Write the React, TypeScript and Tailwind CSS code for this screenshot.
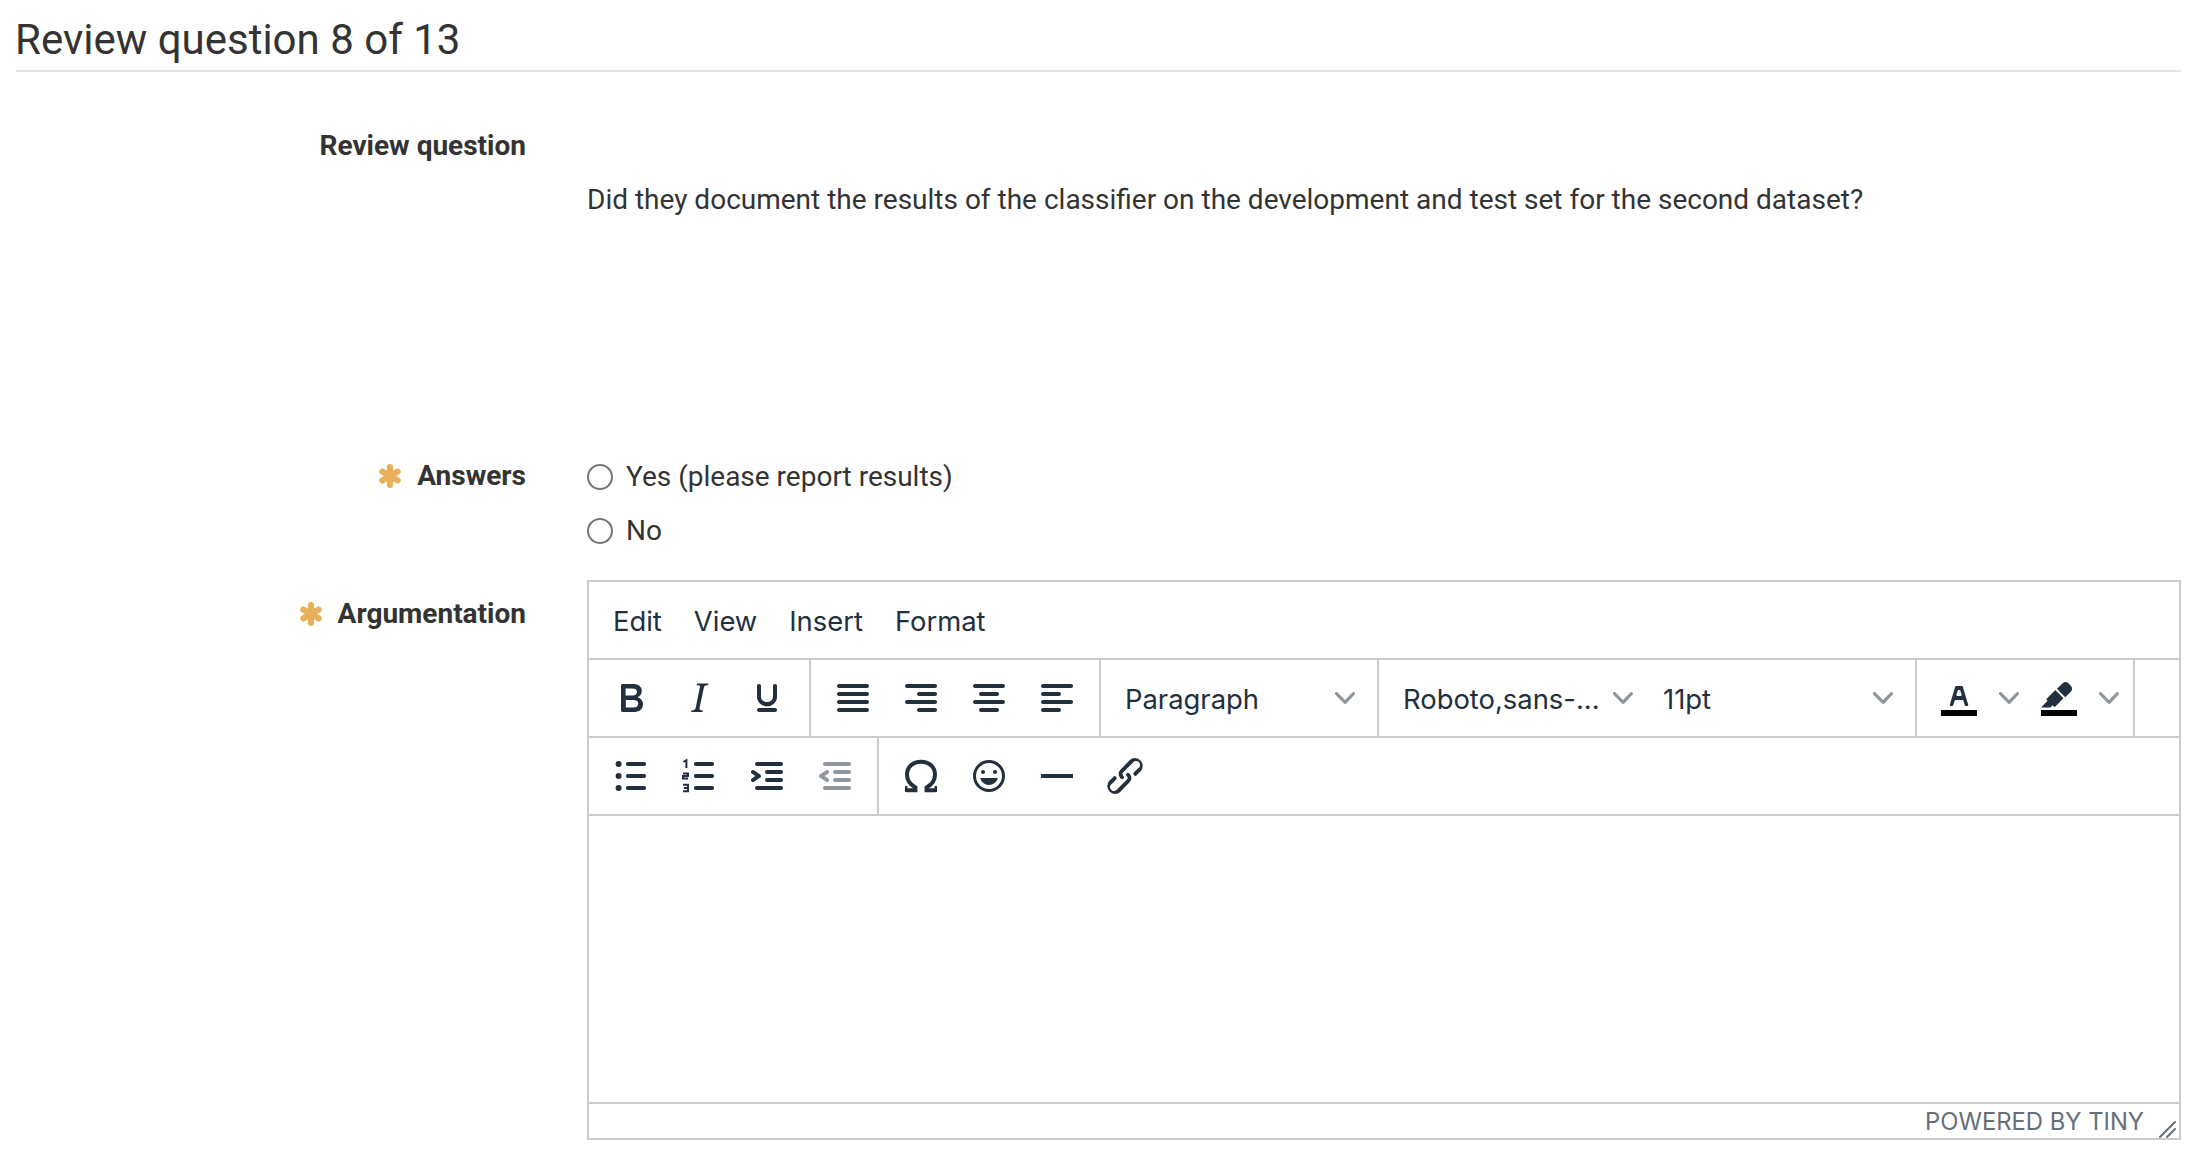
import type { ReactNode } from "react";

const Icon = ({ children, muted }: { children: ReactNode; muted?: boolean }) => (
  <svg viewBox="0 0 24 24" className={muted ? "w-12 h-12 fill-[#222f3e] opacity-50" : "w-12 h-12 fill-[#222f3e]"}>
    {children}
  </svg>
);

const Chevron = () => (
  <svg viewBox="0 0 10 10" className="w-5 h-5 fill-[#222f3e] opacity-50 shrink-0">
    <path d="M8.7 2.2c.3-.3.8-.3 1 0 .4.4.4.9 0 1.2L5.7 7.8c-.3.3-.9.3-1.2 0L.2 3.4a.8.8 0 0 1 0-1.2c.3-.3.8-.3 1.1 0L5 6l3.7-3.8z" />
  </svg>
);

const Star = () => (
  <svg viewBox="0 0 24 24" className="w-6 h-6 stroke-[#e9b05c] shrink-0" strokeWidth="6.2" strokeLinecap="round">
    <path d="M12 3.2v17.6M4.4 7.6l15.2 8.8M19.6 7.6L4.4 16.4" />
  </svg>
);

const Btn = ({ children }: { children: ReactNode }) => (
  <div className="w-[68px] h-[68px] flex items-center justify-center shrink-0">{children}</div>
);

const Group = ({ children, last }: { children: ReactNode; last?: boolean }) => (
  <div className={last ? "flex items-center px-2" : "flex items-center px-2 border-r-2 border-[#cccccc]"}>{children}</div>
);

const Select = ({ label }: { label: string }) => (
  <div className="w-[260px] h-[68px] flex items-center justify-between pl-4 pr-[14px] text-[27.4px] text-[#222f3e] font-[Inter,sans-serif]">
    <span className="truncate pt-1">{label}</span>
    <Chevron />
  </div>
);

const Split = ({ children }: { children: ReactNode }) => (
  <div className="flex items-center h-[68px]">
    <div className="w-[68px] flex justify-center">{children}</div>
    <div className="w-8 flex justify-center">
      <Chevron />
    </div>
  </div>
);

const ToolbarRow = ({ children }: { children: ReactNode }) => (
  <div className="h-[78px] flex border-b-2 border-[#cccccc]">{children}</div>
);

const Bar = ({ d }: { d: string }) => <path d={d} fill="none" stroke="#222f3e" strokeWidth="1.9" strokeLinecap="round" />;

const Label = ({ text, required }: { text: string; required?: boolean }) => (
  <div className="flex items-center justify-end gap-[15px] font-bold text-[28px] leading-[40px] text-[#333333]">
    {required && <Star />}
    <span>{text}</span>
  </div>
);

const Radio = ({ label }: { label: string }) => (
  <label className="h-[54px] flex items-center gap-[13px] text-[28px] text-[#333333]">
    <input type="radio" name="answer" className="appearance-none w-[26px] h-[26px] rounded-full border-2 border-[#767676] bg-white" />
    {label}
  </label>
);

export default function App() {
  return (
    <div className="min-h-[1160px] bg-white pl-4 pr-[15px] font-[Roboto,sans-serif] text-[#333333] overflow-hidden">
      <h3 className="h-[72px] pt-[15px] text-[42px] leading-[50px] border-b-2 border-[#e5e5e5]">
        <span className="-ml-[1px] block">Review question 8 of 13</span>
      </h3>

      <div className="grid grid-cols-[510px_1594px] gap-x-[61px]">
        <div className="pt-[54px] h-[378px]">
          <Label text="Review question" />
        </div>
        <div className="pt-[108px] text-[28px] leading-[40px]">
          Did they document the results of the classifier on the development and test set for the second dataset?
        </div>

        <div className="pt-[6px] h-[130px]">
          <Label text="Answers" required />
        </div>
        <div>
          <Radio label="Yes (please report results)" />
          <Radio label="No" />
        </div>

        <div className="pt-[14px]">
          <Label text="Argumentation" required />
        </div>

        {/* Editor */}
        <div className="border-2 border-[#cccccc] h-[560px] flex flex-col">
          <div className="h-[78px] flex items-center pl-2 pt-1 border-b-2 border-[#cccccc] text-[27.4px] text-[#222f3e] font-[Inter,sans-serif]">
            <span className="px-4">Edit</span>
            <span className="px-4">View</span>
            <span className="px-4">Insert</span>
            <span className="px-4">Format</span>
          </div>

          <ToolbarRow>
            <Group>
              <Btn>
                <Icon>
                  <path d="M7.8 19c-.3 0-.5 0-.6-.2l-.2-.5V5.7c0-.2 0-.4.2-.5l.6-.2h5c1.5 0 2.7.3 3.5 1 .7.6 1.1 1.4 1.1 2.5a3 3 0 0 1-.6 1.9c-.4.6-1 1-1.6 1.2.4.1.9.3 1.3.6s.8.7 1 1.2c.4.4.5 1 .5 1.6 0 1.3-.4 2.3-1.3 3-.8.7-2.1 1-3.8 1H7.8zm5-8.3c.6 0 1.2-.1 1.6-.5.4-.3.6-.7.6-1.3 0-1.1-.8-1.7-2.3-1.7H9.3v3.5h3.4zm.5 6c.7 0 1.3-.1 1.7-.4.4-.4.6-.9.6-1.5s-.2-1-.7-1.4c-.4-.3-1-.4-2-.4H9.4v3.8h4z" />
                </Icon>
              </Btn>
              <Btn>
                <Icon>
                  <path d="M16.7 4.7l-.1.9h-.3c-.6 0-1 0-1.4.3-.3.3-.4.6-.5 1.1l-2.1 9.8v.6c0 .5.4.8 1.4.8h.2l-.2.8H8l.2-.8h.2c1.1 0 1.8-.5 2-1.5l2-9.8.1-.5c0-.6-.4-.8-1.4-.8h-.3l.2-.9h5.8z" />
                </Icon>
              </Btn>
              <Btn>
                <Icon>
                  <path d="M16 5c.6 0 1 .4 1 1v5.5a4 4 0 0 1-.4 1.8l-1 1.4a5.3 5.3 0 0 1-5.5 1 5 5 0 0 1-1.6-1c-.5-.4-.8-.9-1.1-1.4a4 4 0 0 1-.4-1.8V6c0-.6.4-1 1-1s1 .4 1 1v5.5c0 .3 0 .6.2 1l.6.7a3.3 3.3 0 0 0 2.2.8 3.4 3.4 0 0 0 2.2-.8c.3-.2.4-.5.6-.8l.2-.9V6c0-.6.4-1 1-1zM8 17h8c.6 0 1 .4 1 1s-.4 1-1 1H8a1 1 0 0 1 0-2z" />
                </Icon>
              </Btn>
            </Group>
            <Group>
              <Btn>
                <Icon>
                  <path d="M5 5h14c.6 0 1 .4 1 1s-.4 1-1 1H5a1 1 0 1 1 0-2zm0 4h14c.6 0 1 .4 1 1s-.4 1-1 1H5a1 1 0 1 1 0-2zm0 4h14c.6 0 1 .4 1 1s-.4 1-1 1H5a1 1 0 0 1 0-2zm0 4h14c.6 0 1 .4 1 1s-.4 1-1 1H5a1 1 0 0 1 0-2z" />
                </Icon>
              </Btn>
              <Btn>
                <Icon>
                  <path d="M5 5h14c.6 0 1 .4 1 1s-.4 1-1 1H5a1 1 0 1 1 0-2zm6 4h8c.6 0 1 .4 1 1s-.4 1-1 1h-8a1 1 0 0 1 0-2zm0 8h8c.6 0 1 .4 1 1s-.4 1-1 1h-8a1 1 0 0 1 0-2zm-6-4h14c.6 0 1 .4 1 1s-.4 1-1 1H5a1 1 0 0 1 0-2z" />
                </Icon>
              </Btn>
              <Btn>
                <Icon>
                  <path d="M5 5h14c.6 0 1 .4 1 1s-.4 1-1 1H5a1 1 0 1 1 0-2zm3 4h8c.6 0 1 .4 1 1s-.4 1-1 1H8a1 1 0 1 1 0-2zm0 8h8c.6 0 1 .4 1 1s-.4 1-1 1H8a1 1 0 0 1 0-2zm-3-4h14c.6 0 1 .4 1 1s-.4 1-1 1H5a1 1 0 0 1 0-2z" />
                </Icon>
              </Btn>
              <Btn>
                <Icon>
                  <path d="M5 5h14c.6 0 1 .4 1 1s-.4 1-1 1H5a1 1 0 1 1 0-2zm0 4h8c.6 0 1 .4 1 1s-.4 1-1 1H5a1 1 0 1 1 0-2zm0 8h8c.6 0 1 .4 1 1s-.4 1-1 1H5a1 1 0 0 1 0-2zm0-4h14c.6 0 1 .4 1 1s-.4 1-1 1H5a1 1 0 0 1 0-2z" />
                </Icon>
              </Btn>
            </Group>
            <Group>
              <Select label="Paragraph" />
            </Group>
            <Group>
              <Select label="Roboto,sans-..." />
              <Select label="11pt" />
            </Group>
            <Group>
              <Split>
                <Icon>
                  <path d="M3 18h18v3H3z" fill="#000000" />
                  <path d="M8.7 16h-.8a.5.5 0 0 1-.5-.6l2.7-9c.1-.3.3-.4.5-.4h2.8c.2 0 .4.1.5.4l2.7 9a.5.5 0 0 1-.5.6h-.8a.5.5 0 0 1-.4-.4l-.7-2.2c0-.3-.3-.4-.5-.4h-3.4c-.2 0-.4.1-.5.4l-.7 2.2c0 .3-.2.4-.4.4zm2.6-7.6l-.6 2a.5.5 0 0 0 .5.6h1.6a.5.5 0 0 0 .5-.6l-.6-2c0-.3-.3-.4-.5-.4h-.4c-.2 0-.4.1-.5.4z" />
                </Icon>
              </Split>
              <Split>
                <Icon>
                  <path d="M3 18h18v3H3z" fill="#000000" />
                  <path d="M7.7 16.7H3l3.3-3.3-.7-.8L10.2 8l4 4.1-4 4.2c-.2.2-.6.2-.8 0l-.6-.7-1.1 1.1zm5-7.5L11 7.4l3-2.9a2 2 0 0 1 2.6 0L18 6c.7.7.7 2 0 2.7l-2.9 2.9-1.8-1.8-.5-.6" />
                </Icon>
              </Split>
            </Group>
          </ToolbarRow>

          <ToolbarRow>
            <Group>
              <Btn>
                <Icon>
                  <Bar d="M10.4 6h8.2M10.4 12h8.2M10.4 18h8.2" />
                  <circle cx="5.8" cy="6" r="1.5" />
                  <circle cx="5.8" cy="12" r="1.5" />
                  <circle cx="5.8" cy="18" r="1.5" />
                </Icon>
              </Btn>
              <Btn>
                <Icon>
                  <Bar d="M10.4 6h8.2M10.4 12h8.2M10.4 18h8.2" />
                  <path d="M4.2 5l1.5-.9V8M4 10.8h2.5v1.2H4v1.3h2.5M4 16.4h2.5v3.2H4M4.4 18h2" fill="none" stroke="#222f3e" strokeWidth="1" />
                </Icon>
              </Btn>
              <Btn>
                <Icon>
                  <path d="M7 5h12c.6 0 1 .4 1 1s-.4 1-1 1H7a1 1 0 1 1 0-2zm5 4h7c.6 0 1 .4 1 1s-.4 1-1 1h-7a1 1 0 0 1 0-2zm0 4h7c.6 0 1 .4 1 1s-.4 1-1 1h-7a1 1 0 0 1 0-2zm-5 4h12a1 1 0 0 1 0 2H7a1 1 0 0 1 0-2zm-2.6-3.8L6.2 12l-1.8-1.2a1 1 0 0 1 1.2-1.6l3 2a1 1 0 0 1 0 1.6l-3 2a1 1 0 1 1-1.2-1.6z" />
                </Icon>
              </Btn>
              <Btn>
                <Icon muted>
                  <path d="M7 5h12c.6 0 1 .4 1 1s-.4 1-1 1H7a1 1 0 1 1 0-2zm5 4h7c.6 0 1 .4 1 1s-.4 1-1 1h-7a1 1 0 0 1 0-2zm0 4h7c.6 0 1 .4 1 1s-.4 1-1 1h-7a1 1 0 0 1 0-2zm-5 4h12a1 1 0 0 1 0 2H7a1 1 0 0 1 0-2zm1.6-3.8a1 1 0 0 1-1.2 1.6l-3-2a1 1 0 0 1 0-1.6l3-2a1 1 0 0 1 1.2 1.6L6.8 12l1.8 1.2z" />
                </Icon>
              </Btn>
            </Group>
            <Group last>
              <Btn>
                <Icon>
                  <path d="M4.8 19.1h4.4v-1.4C6.7 16.4 5 14.1 5 11.3 5 7.4 8 4.9 12 4.9s7 2.5 7 6.4c0 2.8-1.7 5.1-4.2 6.4v1.4h4.4" fill="none" stroke="#222f3e" strokeWidth="2" />
                  <path d="M4 17h1.2v3H4zM18.8 17H20v3h-1.2z" />
                </Icon>
              </Btn>
              <Btn>
                <Icon>
                  <path d="M9 11c.6 0 1-.4 1-1s-.4-1-1-1a1 1 0 0 0-1 1c0 .6.4 1 1 1zm6 0c.6 0 1-.4 1-1s-.4-1-1-1a1 1 0 0 0-1 1c0 .6.4 1 1 1zm-3 5.5c2.1 0 4-1.5 4.4-3.5H7.6c.5 2 2.3 3.5 4.4 3.5zM12 4a8 8 0 1 0 0 16 8 8 0 0 0 0-16zm0 14.5a6.5 6.5 0 1 1 0-13 6.5 6.5 0 0 1 0 13z" />
                </Icon>
              </Btn>
              <Btn>
                <Icon>
                  <path d="M4 11h16v2H4z" />
                </Icon>
              </Btn>
              <Btn>
                <Icon>
                  <path d="M6.2 12.3a1 1 0 0 1 1.4 1.4l-2 2a2 2 0 1 0 2.6 2.8l4.8-4.8a1 1 0 0 0 0-1.4 1 1 0 1 1 1.4-1.3 2.9 2.9 0 0 1 0 4L9.6 20a3.9 3.9 0 0 1-5.5-5.5l2-2zm11.6-.6a1 1 0 0 1-1.4-1.4l2-2a2 2 0 1 0-2.6-2.8L11 10.3a1 1 0 0 0 0 1.4A1 1 0 1 1 9.6 13a2.9 2.9 0 0 1 0-4L14.4 4a3.9 3.9 0 0 1 5.5 5.5l-2 2z" />
                </Icon>
              </Btn>
            </Group>
          </ToolbarRow>

          <div className="flex-1" />

          <div className="relative h-9 border-t-2 border-[#cccccc] flex items-center justify-end pr-[35px] pt-[2px] text-[23.8px] text-[#667079] font-[Inter,sans-serif]">
            POWERED BY TINY
            <svg viewBox="0 0 18 18" className="absolute right-[2px] bottom-[0px] w-[18px] h-[18px] stroke-[#667079]" strokeWidth="2" strokeLinecap="round">
              <path d="M1 17L16 2M8 17l8-8" />
            </svg>
          </div>
        </div>
      </div>
    </div>
  );
}
